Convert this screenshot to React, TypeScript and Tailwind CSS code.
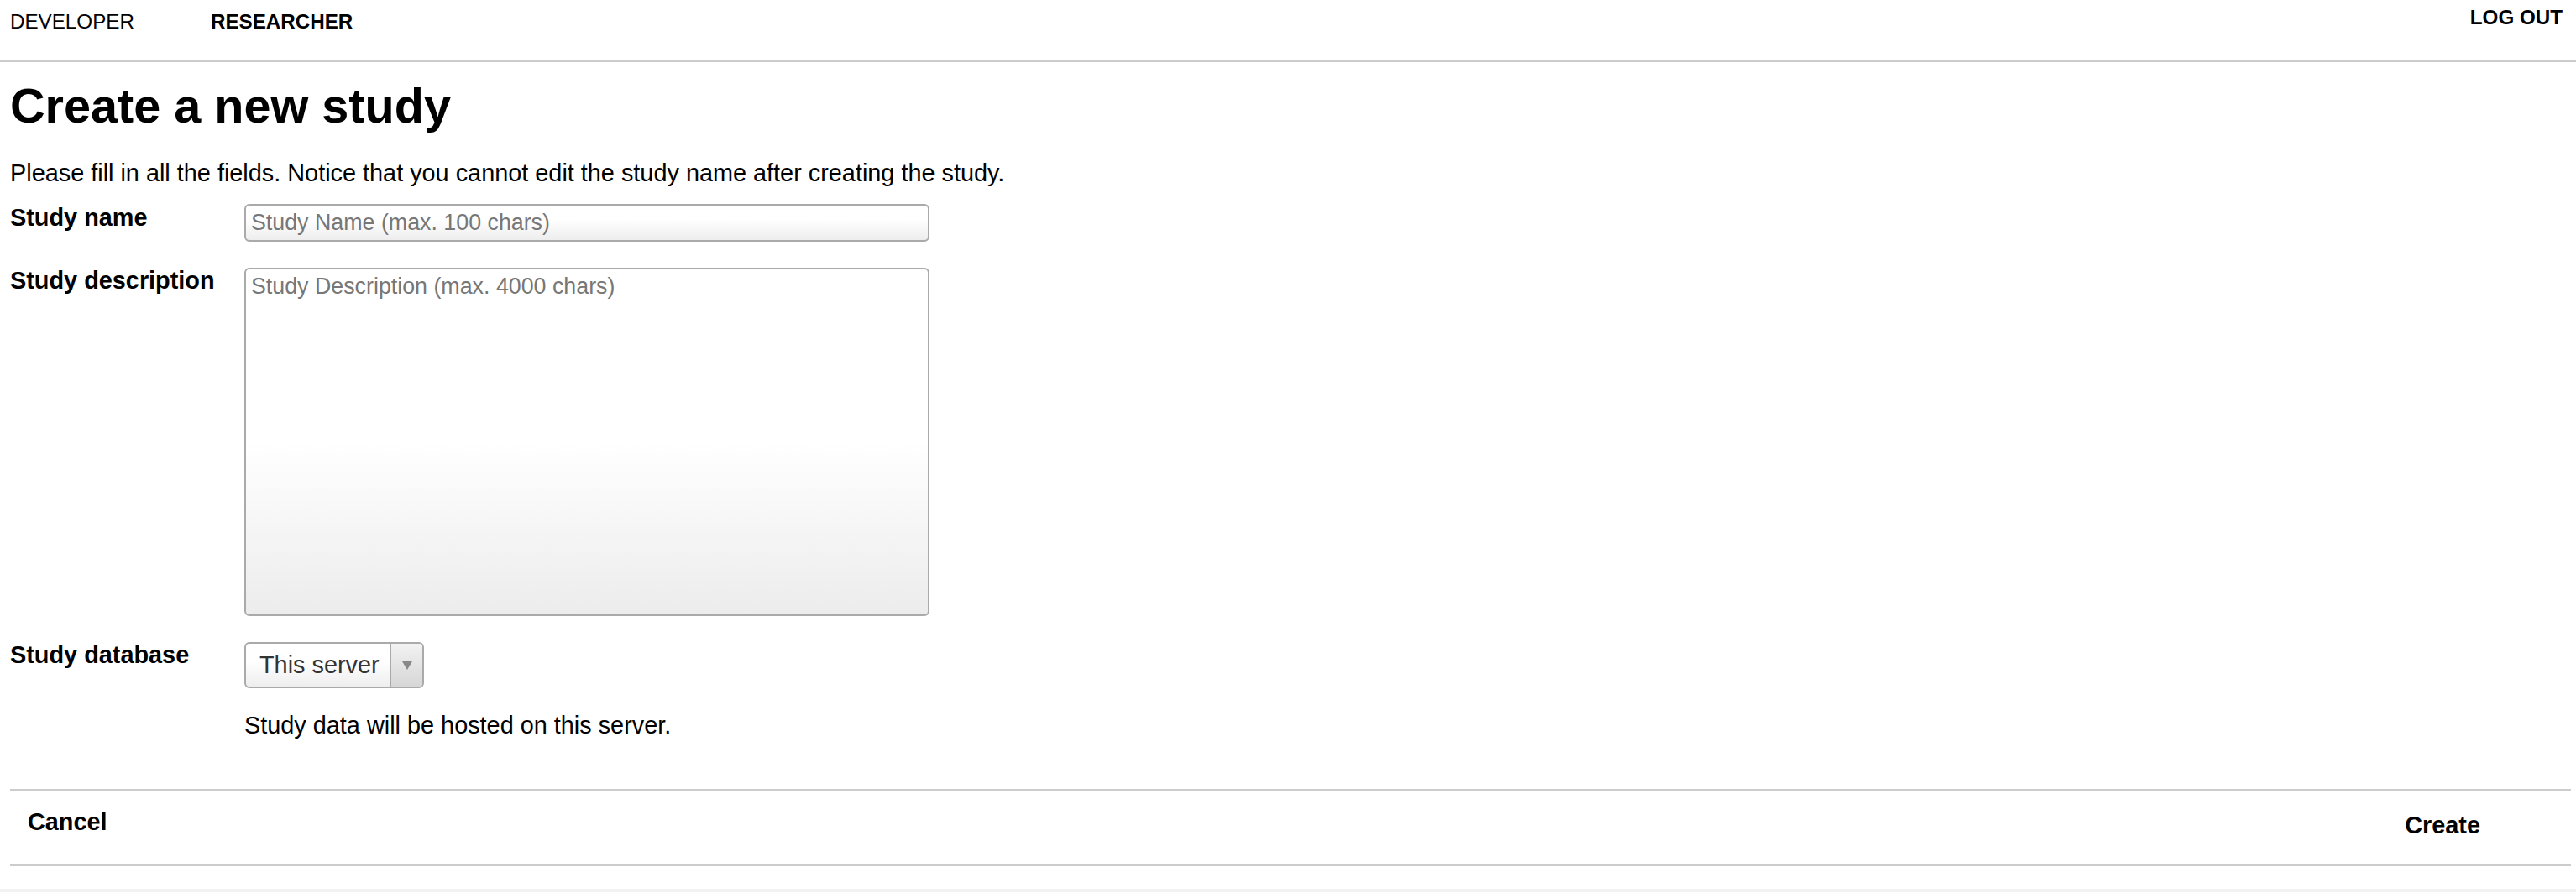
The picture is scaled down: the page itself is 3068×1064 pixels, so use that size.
export default function App() {
  return (
    <div className="min-h-[1064px] bg-white font-['Liberation_Sans',Arial,sans-serif] text-black">
      {/* top nav */}
      <div className="flex h-[74px] items-start justify-between border-b-2 border-[#cccccc] px-[12px]">
        <div className="flex pt-[14px] text-[24.2px] leading-[24px]">
          <span className="w-[239px]">DEVELOPER</span>
          <span className="font-bold">RESEARCHER</span>
        </div>
        <span className="pr-[4px] pt-[9px] text-[24.2px] font-bold leading-[24px]">LOG OUT</span>
      </div>

      <div className="px-[12px]">
        <h1 className="mt-[19px] text-[57.6px] font-bold leading-[66px]">Create a new study</h1>
        <p className="mt-[31px] text-[28.85px] leading-[33px]">
          Please fill in all the fields. Notice that you cannot edit the study name after creating the study.
        </p>

        <div className="mt-[17px] flex items-start">
          <label className="mt-[3px] w-[279px] shrink-0 text-[28.85px] font-bold leading-[33px]">Study name</label>
          <input
            placeholder="Study Name (max. 100 chars)"
            className="mt-[3px] h-[45px] w-[816px] rounded-[6px] border-2 border-[#aaaaaa] bg-[linear-gradient(to_bottom,#ffffff_40%,#ededed)] pl-[6px] text-[26.8px] outline-none placeholder:text-[#777777]"
          />
        </div>

        <div className="mt-[30px] flex items-start">
          <label className="w-[279px] shrink-0 text-[28.85px] font-bold leading-[33px]">Study description</label>
          <textarea
            placeholder="Study Description (max. 4000 chars)"
            className="mt-[1px] h-[415px] w-[816px] resize-none rounded-[6px] border-2 border-[#aaaaaa] bg-[linear-gradient(to_bottom,#ffffff_50%,#ececec)] px-[6px] pt-[5px] text-[26.8px] leading-[30px] outline-none placeholder:text-[#777777]"
          />
        </div>

        <div className="mt-[30px] flex items-start">
          <label className="w-[279px] shrink-0 text-[28.85px] font-bold leading-[33px]">Study database</label>
          <div>
            <div className="mt-[1px] flex h-[55px] w-[214px] overflow-hidden rounded-[6px] border-2 border-[#aaaaaa] bg-[linear-gradient(to_bottom,#ffffff_40%,#eeeeee)]">
              <span className="flex flex-1 items-center pl-[16px] text-[28.85px] text-[#333333]">This server</span>
              <span className="flex w-[39px] items-center justify-center border-l-2 border-[#aaaaaa] bg-[linear-gradient(to_bottom,#f2f2f2,#d6d6d6)]">
                <svg width="12" height="10" viewBox="0 0 12 10">
                  <path d="M0 0 L12 0 L6 10 Z" fill="#888888" />
                </svg>
              </span>
            </div>
          </div>
        </div>

        <p className="ml-[279px] mt-[28px] text-[28.85px] leading-[33px]">Study data will be hosted on this server.</p>

        {/* footer actions */}
        <div className="-mr-[6px] mt-[59px] flex h-[92px] items-start justify-between border-y-2 border-[#cccccc]">
          <button className="pl-[21px] pt-[21px] text-[28.85px] font-bold leading-[33px]">Cancel</button>
          <button className="pr-[108px] pt-[25px] text-[28.85px] font-bold leading-[33px]">Create</button>
        </div>
      </div>
      <div className="mt-[27px] h-[4px] bg-[#f2f2f2]" />
    </div>
  );
}
